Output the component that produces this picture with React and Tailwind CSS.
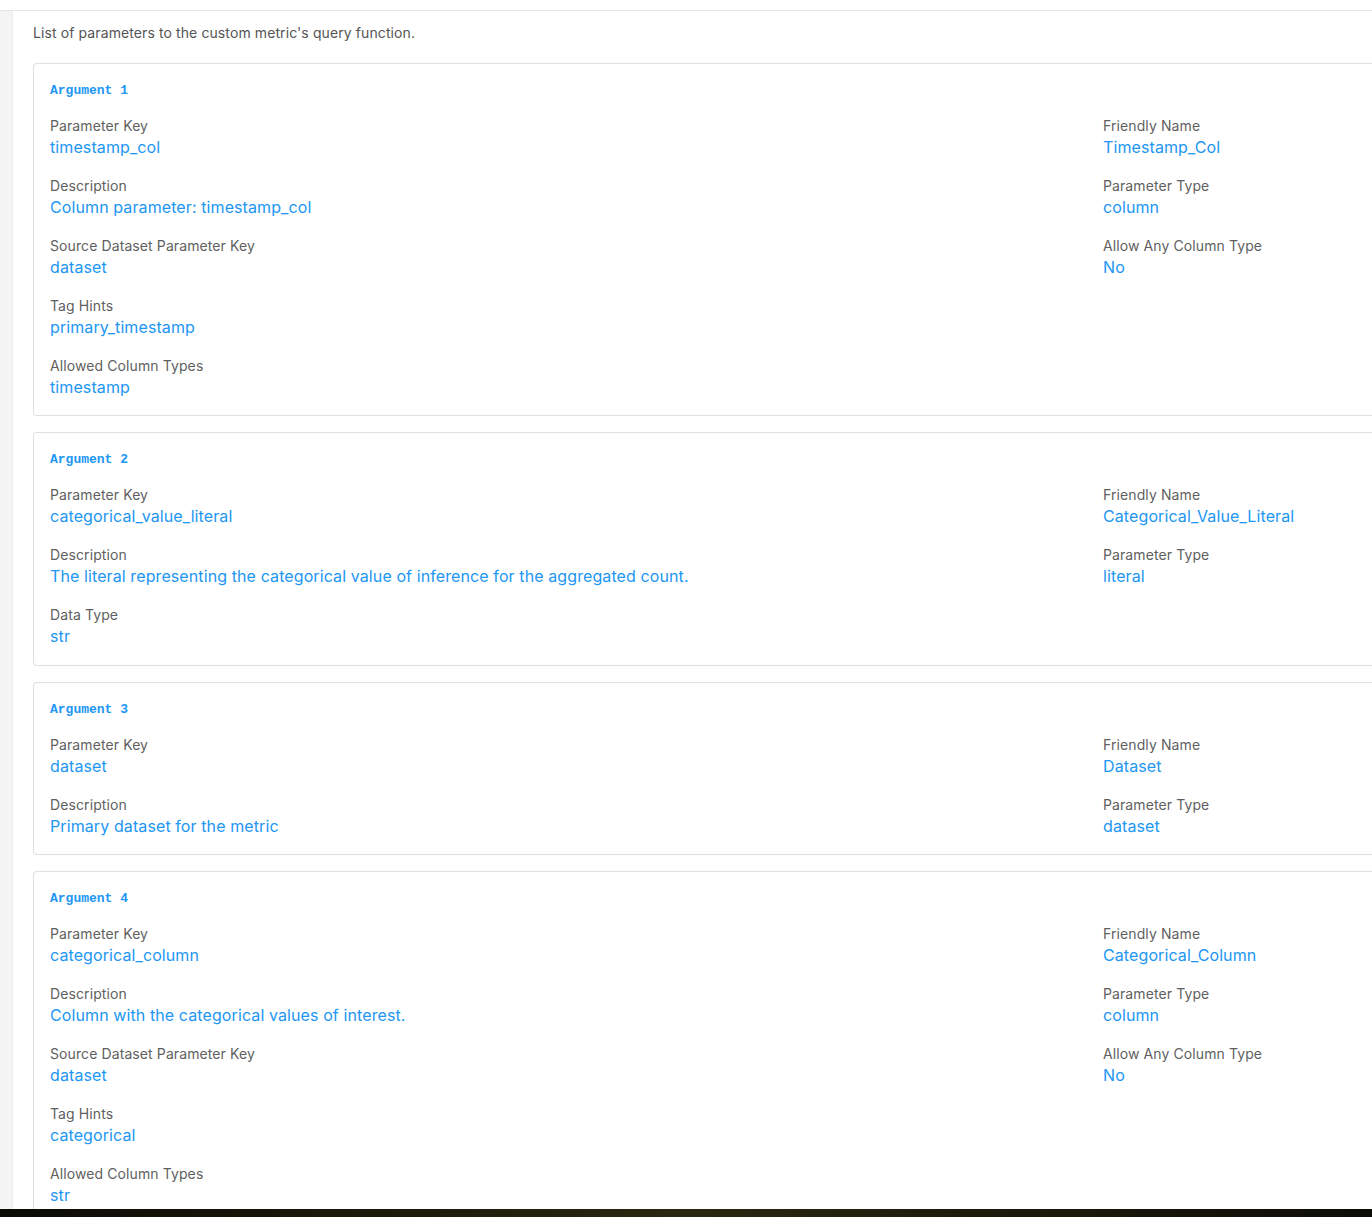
import React from 'react';

const args = [
  {
    left: [
      ['Parameter Key', 'timestamp_col'],
      ['Description', 'Column parameter: timestamp_col'],
      ['Source Dataset Parameter Key', 'dataset'],
      ['Tag Hints', 'primary_timestamp'],
      ['Allowed Column Types', 'timestamp'],
    ],
    right: [
      ['Friendly Name', 'Timestamp_Col'],
      ['Parameter Type', 'column'],
      ['Allow Any Column Type', 'No'],
    ],
  },
  {
    left: [
      ['Parameter Key', 'categorical_value_literal'],
      ['Description', 'The literal representing the categorical value of inference for the aggregated count.'],
      ['Data Type', 'str'],
    ],
    right: [
      ['Friendly Name', 'Categorical_Value_Literal'],
      ['Parameter Type', 'literal'],
    ],
  },
  {
    left: [
      ['Parameter Key', 'dataset'],
      ['Description', 'Primary dataset for the metric'],
    ],
    right: [
      ['Friendly Name', 'Dataset'],
      ['Parameter Type', 'dataset'],
    ],
  },
  {
    left: [
      ['Parameter Key', 'categorical_column'],
      ['Description', 'Column with the categorical values of interest.'],
      ['Source Dataset Parameter Key', 'dataset'],
      ['Tag Hints', 'categorical'],
      ['Allowed Column Types', 'str'],
    ],
    right: [
      ['Friendly Name', 'Categorical_Column'],
      ['Parameter Type', 'column'],
      ['Allow Any Column Type', 'No'],
    ],
  },
];

const Field = ({ label, value }) => (
  <div>
    <div className="text-[14px] leading-5 tracking-[0.1px] text-[#5f5f5f]">{label}</div>
    <div className="text-[16px] leading-[22px] tracking-[0.1px] text-[#2196f3]">{value}</div>
  </div>
);

const ArgumentCard = ({ index, arg }) => (
  <div className="border border-r-0 border-[#e0e0e0] rounded-l-[4px] bg-white px-4 pt-4 pb-[17.4px] mb-4">
    <div className="mt-[1px] mb-[15px] text-[13px] leading-5 font-bold text-[#2196f3] font-['Liberation_Mono',monospace]">
      Argument {index + 1}
    </div>
    <div className="flex">
      <div className="w-[1053px] flex flex-col gap-[18px]">
        {arg.left.map(([l, v]) => (
          <Field key={l} label={l} value={v} />
        ))}
      </div>
      <div className="flex-1 flex flex-col gap-[18px]">
        {arg.right.map(([l, v]) => (
          <Field key={l} label={l} value={v} />
        ))}
      </div>
    </div>
  </div>
);

const App = () => {
  return (
    <div className="h-[1217px] overflow-hidden bg-white font-['Inter',sans-serif] flex flex-col">
      <div className="h-[11px] shrink-0 border-b border-[#e4e4e4] bg-white" />
      <div className="flex flex-1 min-h-0">
        <div className="w-[13px] shrink-0 bg-[#f4f4f4] border-r border-[#ececec]" />
        <div className="flex-1 min-w-0 pl-5 pt-3 overflow-hidden">
          <p className="text-[14px] leading-5 tracking-[0.1px] text-[#555] mb-5">
            List of parameters to the custom metric's query function.
          </p>
          {args.map((arg, i) => (
            <ArgumentCard key={i} index={i} arg={arg} />
          ))}
        </div>
      </div>
      <div className="h-[8px] shrink-0 bg-gradient-to-r from-[#0b0b06] via-[#2a2810] to-[#0d0d08]" />
    </div>
  );
};

export default App;
